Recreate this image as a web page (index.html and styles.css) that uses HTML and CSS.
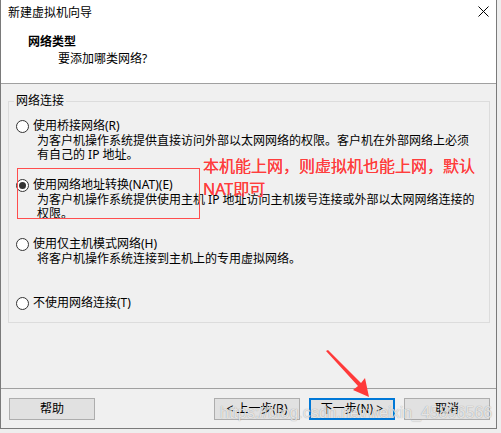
FILE: index.html
```html
<!DOCTYPE html>
<html lang="zh-CN">
<head>
<meta charset="utf-8">
<title>新建虚拟机向导</title>
<link rel="stylesheet" href="styles.css">
</head>
<body>
<div class="dialog">
  <div class="header">
    <div class="titlebar">
      <span class="title">新建虚拟机向导</span>
      <svg class="close" width="11" height="11" viewBox="0 0 11 11"><path d="M0.5 0.5 L10.5 10.5 M10.5 0.5 L0.5 10.5" stroke="#000" stroke-width="1" fill="none"/></svg>
    </div>
    <div class="heading">网络类型</div>
    <div class="subheading">要添加哪类网络?</div>
  </div>
  <div class="content">
    <fieldset class="group">
      <legend>网络连接</legend>
      <div class="options">
        <div class="option">
          <div class="option-row"><span class="radio"></span><span>使用桥接网络(R)</span></div>
          <div class="desc">为客户机操作系统提供直接访问外部以太网网络的权限。客户机在外部网络上必须<br>有自己的 IP 地址。</div>
        </div>
        <div class="option">
          <div class="option-row"><span class="radio checked"></span><span>使用网络地址转换(NAT)(E)</span></div>
          <div class="desc">为客户机操作系统提供使用主机 IP 地址访问主机拨号连接或外部以太网网络连接的<br>权限。</div>
        </div>
        <div class="option">
          <div class="option-row"><span class="radio"></span><span>使用仅主机模式网络(H)</span></div>
          <div class="desc">将客户机操作系统连接到主机上的专用虚拟网络。</div>
        </div>
        <div class="option">
          <div class="option-row"><span class="radio"></span><span>不使用网络连接(T)</span></div>
        </div>
      </div>
    </fieldset>
  </div>
  <div class="footer">
    <button class="btn">帮助</button>
    <div class="btn-group">
      <button class="btn">&lt; 上一步(B)</button>
      <button class="btn btn-default">下一步(N) &gt;</button>
      <button class="btn">取消</button>
    </div>
  </div>

  <div class="note-box"></div>
  <div class="note-text">本机能上网，则虚拟机也能上网，默认<br>NAT即可</div>
  <svg class="arrow" width="497" height="429" viewBox="0 0 497 429"><polygon points="326,351 328,350 361,383 365,378 369,397 353,390 358,386" fill="#ff3a3a"/></svg>
  <div class="watermark">https://blog.csdn.net/weixin_45896566</div>
</div>
</body>
</html>
```

FILE: styles.css
```css
html, body {
  margin: 0;
  padding: 0;
}
body {
  background: #eeeeee;
  font-family: "Noto Sans", "Noto Sans CJK SC", sans-serif;
  font-size: 12px;
  color: #000;
}
.dialog {
  position: relative;
  width: 497px;
  height: 429px;
  box-sizing: border-box;
  border-left: 1px solid #7a7a7a;
  border-right: 1px solid #7a7a7a;
  border-bottom: 1px solid #7a7a7a;
  background: #f0f0f0;
  overflow: hidden;
}
.header {
  height: 84px;
  box-sizing: border-box;
  background: #ffffff;
  border-bottom: 1px solid #a0a0a0;
}
.titlebar {
  height: 26px;
  box-sizing: border-box;
  display: flex;
  justify-content: space-between;
  align-items: flex-start;
  padding: 5px 7px 0 7px;
  line-height: 16px;
}
.close {
  margin-top: 1px;
}
.heading {
  margin-top: 8px;
  padding-left: 27px;
  line-height: 16px;
  font-weight: bold;
}
.subheading {
  margin-top: 1px;
  padding-left: 57px;
  line-height: 16px;
}
.content {
  height: 304px;
  box-sizing: border-box;
  padding: 10px 6px 0 7px;
}
.group {
  margin: 0;
  padding: 10px 0 11px 0;
  border: 1px solid #dcdcdc;
  min-width: 0;
}
.group legend {
  margin-left: 5px;
  padding: 0 2px;
  line-height: 14px;
}
.options {
  display: flex;
  flex-direction: column;
  gap: 15px;
  padding-left: 7px;
}
.option-row {
  display: flex;
  align-items: center;
  gap: 4px;
  height: 16px;
  line-height: 16px;
}
.radio {
  position: relative;
  width: 13px;
  height: 13px;
  box-sizing: border-box;
  border: 1px solid #333333;
  border-radius: 50%;
  background: #ffffff;
  flex: none;
}
.radio.checked::after {
  content: "";
  position: absolute;
  left: 2px;
  top: 2px;
  width: 7px;
  height: 7px;
  border-radius: 50%;
  background: #333333;
}
.desc {
  padding-left: 21px;
  line-height: 14px;
  height: 28px;
  white-space: nowrap;
}
.footer {
  height: 40px;
  box-sizing: border-box;
  border-top: 1px solid #a0a0a0;
  display: flex;
  align-items: flex-start;
  padding: 9px 6px 0 8px;
}
.btn-group {
  margin-left: auto;
  display: flex;
  gap: 9px;
}
.btn {
  width: 86px;
  height: 22px;
  box-sizing: border-box;
  border: 1px solid #adadad;
  background: #e1e1e1;
  font-family: "Noto Sans", "Noto Sans CJK SC", sans-serif;
  font-size: 12px;
  color: #000;
  padding: 0;
  line-height: 18px;
}
.btn-default {
  border: 2px solid #0078d7;
}
.note-box {
  position: absolute;
  left: 16px;
  top: 168px;
  width: 183px;
  height: 51px;
  box-sizing: border-box;
  border: 1px solid #ff4d4d;
}
.note-text {
  position: absolute;
  left: 202px;
  top: 155px;
  font-size: 16px;
  line-height: 23px;
  color: #ff3d3d;
  text-shadow: 0 0 0.4px #ff3d3d;
}
.arrow {
  position: absolute;
  left: -1px;
  top: 0;
  pointer-events: none;
}
.watermark {
  position: absolute;
  left: 219px;
  top: 404px;
  font-family: "Liberation Sans", Arial, sans-serif;
  font-size: 16px;
  line-height: 18px;
  color: rgba(255, 255, 255, 0.75);
  text-shadow: 0 0 1px rgba(0, 0, 0, 0.4);
  white-space: nowrap;
  pointer-events: none;
}
```
